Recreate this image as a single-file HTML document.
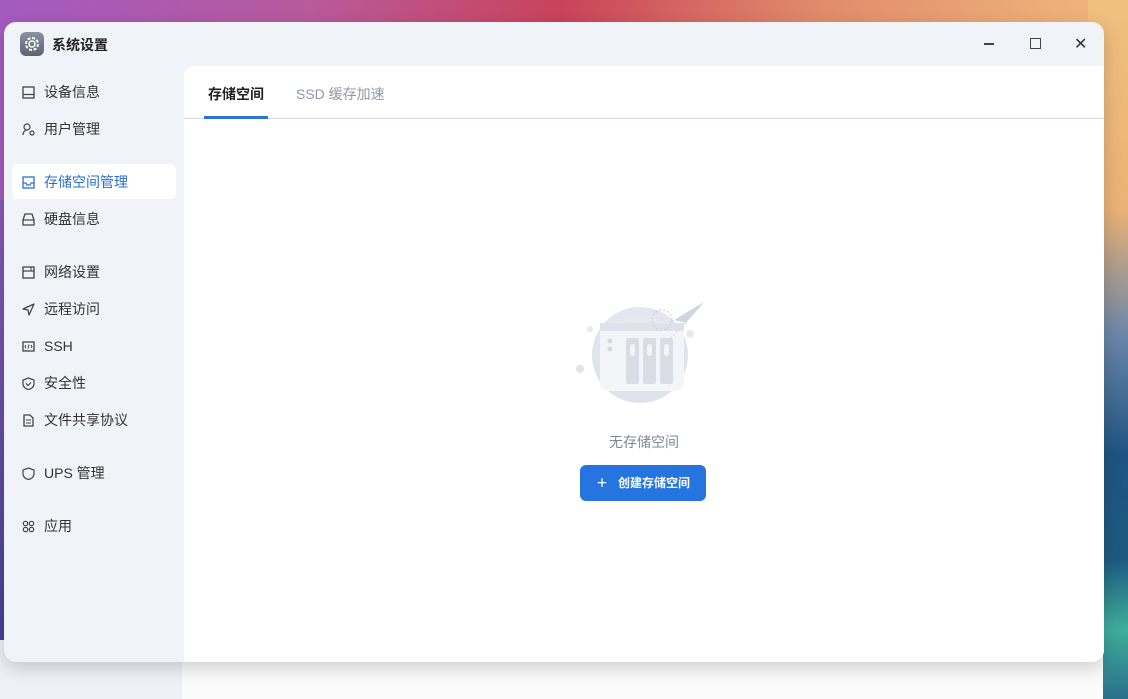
<!DOCTYPE html>
<html><head><meta charset="utf-8"><style>
*{margin:0;padding:0;box-sizing:border-box}
body{width:1128px;height:699px;overflow:hidden;position:relative;font-family:"Liberation Sans","Noto Sans CJK SC",sans-serif;
background:linear-gradient(100deg,#a25bc0 0%,#b85a9c 25%,#c9435a 45%,#e08a6a 65%,#eeb07a 85%,#f0c080 100%);}
.bgr{position:absolute;right:0;top:0;width:40px;height:699px;background:linear-gradient(180deg,#f0c080 0%,#eab276 30%,#6a86a8 48%,#1f5482 65%,#1e5a80 80%,#3fae9c 90%,#2a6f8a 100%)}
.bgl{position:absolute;left:0;top:200px;width:10px;height:499px;background:linear-gradient(180deg,#8a5ab8,#3b3f94)}
.under{position:absolute;left:0;top:640px;width:1103px;height:59px;background:#fbfbfb}
.under:before{content:"";position:absolute;left:0;top:0;width:182px;height:59px;background:#eef1f6}
.win{position:absolute;left:4px;top:22px;width:1100px;height:640px;background:#f0f3f8;border-radius:12px;overflow:hidden;box-shadow:0 6px 18px rgba(0,0,0,.18)}
.title{position:absolute;left:48px;top:13px;font-size:14px;font-weight:bold;color:#222}
.logo{position:absolute;left:16px;top:10px;width:24px;height:24px;border-radius:6px;background:linear-gradient(#8a93a3,#5b6474)}
.ctl{position:absolute;top:14px;font-size:14px;color:#333}
.main{position:absolute;left:180px;top:44px;width:920px;height:596px;background:#fff;border-top-left-radius:10px}
.tabs{height:53px;border-bottom:1px solid #d5dbe3;position:relative}
.tab{position:absolute;top:18px;font-size:14px}
.ul{position:absolute;left:20px;top:50px;width:64px;height:3px;background:#2a73d9}
.item{position:absolute;left:8px;width:164px;height:35px;border-radius:6px;font-size:14px;color:#333;line-height:37px;padding-left:32px}
.item svg{position:absolute;left:10px;top:12px}
.act{background:#fff;color:#2a6fd1}
.btn{position:absolute;left:396px;top:399px;width:126px;height:36px;border-radius:6px;background:#2574e0;color:#fff;font-size:12px;font-weight:bold;line-height:36px;text-align:center}
</style></head><body>
<div class="bgl"></div><div class="bgr"></div><div class="under"></div>
<div class="win">
<div class="logo"><svg width="24" height="24" viewBox="0 0 24 24"><circle cx="12" cy="12" r="6" fill="none" stroke="#fff" stroke-width="2" stroke-dasharray="3 1.7"/><circle cx="12" cy="12" r="3" fill="none" stroke="#fff" stroke-width="1.5"/></svg></div>
<div class="title">系统设置</div>
<div class="ctl" style="left:980px;top:21px;width:10px;height:1.5px;background:#444"></div>
<div class="ctl" style="left:1026px;top:16px;width:11px;height:11px;border:1.5px solid #444"></div>
<div class="ctl" style="left:1070px;top:12px;font-size:16px">✕</div>
<div class="item" style="top:52px"><svg width="13" height="13"><rect x="1" y="1" width="11" height="11" fill="none" stroke="#444" stroke-width="1.3"/><line x1="1" y1="8.5" x2="12" y2="8.5" stroke="#444" stroke-width="1.3"/></svg>设备信息</div>
<div class="item" style="top:89px"><svg width="13" height="13"><circle cx="5" cy="4" r="3" fill="none" stroke="#444" stroke-width="1.2"/><path d="M1 12c0-3 2-5 4-5" fill="none" stroke="#444" stroke-width="1.2"/><circle cx="10" cy="10" r="2" fill="none" stroke="#444" stroke-width="1.2"/></svg>用户管理</div>
<div class="item act" style="top:142px"><svg width="13" height="13"><rect x="1" y="1" width="11" height="11" fill="none" stroke="#2a6fd1" stroke-width="1.3"/><path d="M1 7h3l1 2h3l1-2h3" fill="none" stroke="#2a6fd1" stroke-width="1.2"/></svg>存储空间管理</div>
<div class="item" style="top:179px"><svg width="13" height="13"><path d="M1 7L3 1h7l2 6v5H1z" fill="none" stroke="#444" stroke-width="1.3"/><line x1="1" y1="7" x2="12" y2="7" stroke="#444" stroke-width="1.2"/></svg>硬盘信息</div>
<div class="item" style="top:232px"><svg width="13" height="13"><rect x="1" y="1" width="11" height="11" fill="none" stroke="#444" stroke-width="1.3"/><line x1="1" y1="5" x2="12" y2="5" stroke="#444" stroke-width="1.2"/><line x1="9" y1="1" x2="9" y2="5" stroke="#444"/></svg>网络设置</div>
<div class="item" style="top:269px"><svg width="13" height="13"><path d="M12 1L1 6l5 1 1 5z" fill="none" stroke="#444" stroke-width="1.3" stroke-linejoin="round"/></svg>远程访问</div>
<div class="item" style="top:306px"><svg width="13" height="13"><rect x="1" y="2" width="11" height="9" fill="none" stroke="#444" stroke-width="1.3"/><path d="M4 5L3 6.5 4 8M9 5l1 1.5L9 8M7 4.5L6 8.5" fill="none" stroke="#444"/></svg>SSH</div>
<div class="item" style="top:343px"><svg width="13" height="13"><path d="M6.5 1L12 3v4c0 3-3 5-5.5 5.5C4 12 1 10 1 7V3z" fill="none" stroke="#444" stroke-width="1.2"/><path d="M4 6.5l2 2 3-3" fill="none" stroke="#444" stroke-width="1.2"/></svg>安全性</div>
<div class="item" style="top:380px"><svg width="13" height="13"><path d="M2 1h6l3 3v8H2z" fill="none" stroke="#444" stroke-width="1.3"/><path d="M4 6h5M4 9h5" stroke="#444"/></svg>文件共享协议</div>
<div class="item" style="top:433px"><svg width="13" height="13"><path d="M6.5 1L12 3v4c0 3-3 5-5.5 5.5C4 12 1 10 1 7V3z" fill="none" stroke="#444" stroke-width="1.2"/></svg>UPS 管理</div>
<div class="item" style="top:486px"><svg width="13" height="13"><circle cx="3.5" cy="3.5" r="2.2" fill="none" stroke="#444" stroke-width="1.2"/><circle cx="9.5" cy="3.5" r="2.2" fill="none" stroke="#444" stroke-width="1.2"/><circle cx="3.5" cy="9.5" r="2.2" fill="none" stroke="#444" stroke-width="1.2"/><circle cx="9.5" cy="9.5" r="2.2" fill="none" stroke="#444" stroke-width="1.2"/></svg>应用</div>
<div class="main">
<div class="tabs"><div class="tab" style="left:24px;font-weight:bold;color:#222">存储空间</div><div class="tab" style="left:112px;color:#8e98a6">SSD 缓存加速</div><div class="ul"></div></div>
<svg style="position:absolute;left:386px;top:230px" width="140" height="120" viewBox="0 0 140 120">
<defs><radialGradient id="g" cx=".5" cy=".4"><stop offset="0" stop-color="#eef0f6"/><stop offset="1" stop-color="#dfe3ec"/></radialGradient></defs>
<circle cx="70" cy="59" r="48" fill="url(#g)"/>
<circle cx="20" cy="33" r="3" fill="#e6e9f0"/><circle cx="10" cy="73" r="4" fill="#e0e4ec"/><circle cx="120" cy="38" r="4" fill="#e6e9f0"/>
<rect x="30" y="27" width="84" height="68" rx="8" fill="#f4f5f8"/><rect x="30" y="27" width="84" height="8" fill="#dfe2ea"/>
<circle cx="40" cy="45" r="2.5" fill="#d5d9e3"/><circle cx="40" cy="53" r="2.5" fill="#d5d9e3"/>
<rect x="56" y="42" width="13" height="46" rx="2" fill="#d9dde6"/><rect x="73" y="42" width="13" height="46" rx="2" fill="#d9dde6"/><rect x="90" y="42" width="13" height="46" rx="2" fill="#d9dde6"/>
<rect x="60" y="48" width="5" height="12" rx="2.5" fill="#f4f5f8"/><rect x="77" y="48" width="5" height="12" rx="2.5" fill="#f4f5f8"/><rect x="94" y="48" width="5" height="12" rx="2.5" fill="#f4f5f8"/>
<circle cx="92" cy="24" r="10" fill="none" stroke="#c9cdd6" stroke-dasharray="2 2"/>
<path d="M134 6L104 24l12 3z" fill="#cfd6e3"/><path d="M100 42l16-15" stroke="#cfd6e3" stroke-dasharray="2 2"/>
</svg>
<div style="position:absolute;left:0;width:920px;top:366px;text-align:center;font-size:14px;color:#7f8896">无存储空间</div>
<div class="btn">＋&nbsp;&nbsp; 创建存储空间</div>
</div>
</div>
</body></html>
